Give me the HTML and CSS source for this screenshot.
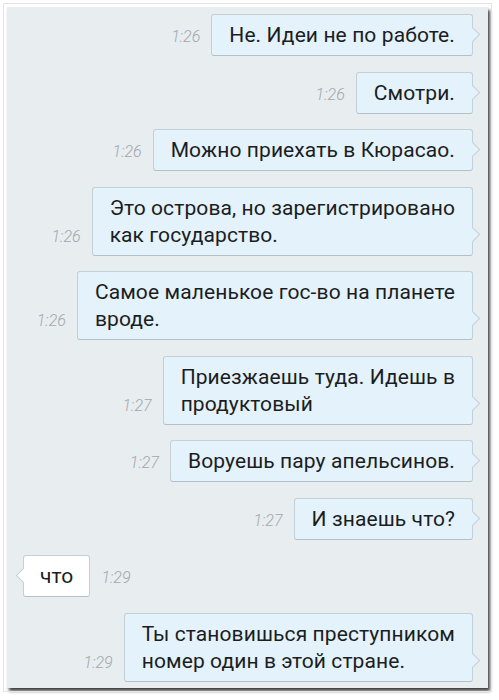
FILE: index.html
```html
<!DOCTYPE html>
<html lang="ru">
<head>
<meta charset="utf-8">
<link rel="stylesheet" href="styles.css">
</head>
<body>
<div class="frame">
  <div class="row out"><span class="time">1:26</span><div class="bubble">Не. Идеи не по работе.</div></div>
  <div class="row out"><span class="time">1:26</span><div class="bubble">Смотри.</div></div>
  <div class="row out"><span class="time">1:26</span><div class="bubble">Можно приехать в Кюрасао.</div></div>
  <div class="row out"><span class="time">1:26</span><div class="bubble">Это острова, но зарегистрировано<br>как государство.</div></div>
  <div class="row out"><span class="time">1:26</span><div class="bubble">Самое маленькое гос-во на планете<br>вроде.</div></div>
  <div class="row out"><span class="time">1:27</span><div class="bubble">Приезжаешь туда. Идешь в<br>продуктовый</div></div>
  <div class="row out"><span class="time">1:27</span><div class="bubble">Воруешь пару апельсинов.</div></div>
  <div class="row out"><span class="time">1:27</span><div class="bubble">И знаешь что?</div></div>
  <div class="row in"><div class="bubble">что</div><span class="time">1:29</span></div>
  <div class="row out"><span class="time">1:29</span><div class="bubble">Ты становишься преступником<br>номер один в этой стране.</div></div>
</div>
</body>
</html>
```
FILE: styles.css
```css
html, body {
  margin: 0;
  padding: 0;
  background: #ffffff;
}
body {
  width: 499px;
  height: 700px;
  overflow: hidden;
  font-family: Roboto, "Noto Sans", sans-serif;
}
.frame {
  box-sizing: border-box;
  margin: 7px 0 0 7px;
  width: 481px;
  height: 681px;
  background: #e8edf0;
  padding: 7px 15px 0 16px;
  display: flex;
  flex-direction: column;
  gap: 15.5px;
  box-shadow: 2px 3px 3px rgba(0, 0, 0, 0.75);
  outline: 1px solid #e2e4e6;
  outline-offset: 3px;
}
.row {
  display: flex;
  align-items: flex-end;
  gap: 11px;
}
.row.out {
  justify-content: flex-end;
}
.row.in {
  justify-content: flex-start;
}
.bubble {
  position: relative;
  background: #e4f2fb;
  border: 1px solid #c3d0d8;
  border-bottom-color: #b3c0c8;
  border-radius: 3px;
  padding: 7px 17px 6px 17px;
  font-size: 21px;
  letter-spacing: 0.1px;
  line-height: 27px;
  color: #1b1d1f;
}
.row.in .bubble {
  background: #ffffff;
  padding: 7px 16px 6px 16px;
}
.bubble::after {
  content: "";
  position: absolute;
  width: 11px;
  height: 11px;
  bottom: 15px;
  background: inherit;
  transform: rotate(45deg);
  box-sizing: border-box;
}
.row.out .bubble::after {
  right: -6px;
  border-top: 1px solid #c3d0d8;
  border-right: 1px solid #c3d0d8;
}
.row.in .bubble::after {
  left: -6px;
  border-bottom: 1px solid #c3d0d8;
  border-left: 1px solid #c3d0d8;
}
.time {
  font-size: 16px;
  line-height: 16px;
  font-style: italic;
  font-weight: 300;
  color: #a2a9ae;
  padding-bottom: 11px;
}
```
